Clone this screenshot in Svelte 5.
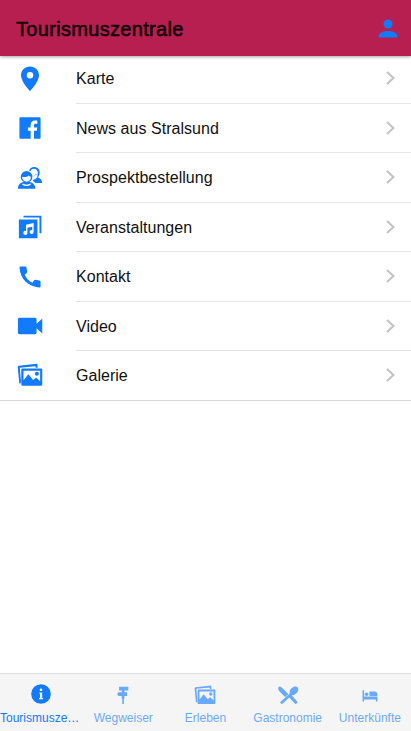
<script lang="ts">
  type Icon =
    | 'pin' | 'facebook' | 'people' | 'albums' | 'call' | 'videocam'
    | 'images' | 'info' | 'sign' | 'restaurant' | 'bed'

  interface Entry {
    label: string
    icon: Icon
  }

  const entries: Entry[] = [
    { label: 'Karte', icon: 'pin' },
    { label: 'News aus Stralsund', icon: 'facebook' },
    { label: 'Prospektbestellung', icon: 'people' },
    { label: 'Veranstaltungen', icon: 'albums' },
    { label: 'Kontakt', icon: 'call' },
    { label: 'Video', icon: 'videocam' },
    { label: 'Galerie', icon: 'images' }
  ]

  const tabs: Entry[] = [
    { label: 'Tourismuszentrale', icon: 'info' },
    { label: 'Wegweiser', icon: 'sign' },
    { label: 'Erleben', icon: 'images' },
    { label: 'Gastronomie', icon: 'restaurant' },
    { label: 'Unterkünfte', icon: 'bed' }
  ]

  let active = $state(0)
</script>

<!-- All icons share a 28x28 grid -->
{#snippet glyph(name: Icon)}
  <svg class="glyph" viewBox="0 0 28 28" aria-hidden="true">
    {#if name === 'pin'}
      <path fill-rule="evenodd" d="M14 .5c-5.400 0-9.700 4.200-9.700 9.400C4.300 17 14 27 14 27s9.700-10 9.700-17.100C23.700 4.700 19.400.5 14 .5zm0 5.900a3.500 3.500 0 1 1 0 7 3.500 3.500 0 0 1 0-7z" />
    {:else if name === 'facebook'}
      <path d="M24 2.500H4c-.8 0-1.400.6-1.400 1.400v20.200c0 .8.6 1.400 1.400 1.400h10.700v-8.600h-2.900v-3.500h2.900v-2.800c0-2.900 1.800-4.600 4.500-4.600 1.300 0 2.400.1 2.700.1v3.200h-1.800c-1.500 0-1.800.7-1.800 1.800v2.300h3.500l-.5 3.500h-3v8.600H24c.8 0 1.400-.6 1.400-1.400V3.900c0-.8-.6-1.400-1.400-1.400z" />
    {:else if name === 'people'}
      <path d="M13 6.300c.6-2.700 2.500-4.200 5.400-4.200 3.600 0 6 2.400 6 5.600 0 2.300-.8 4.300-2.300 5.600 2.600.9 4.700 2 4.900 6.100h-7.300c-.6-.9-1.400-1.500-2.700-2.100 1.500-1.800 2.100-4.100 1.700-6.500 1.500-.1 2.800-.6 3.900-1.600-.3-3.100-1.700-5.100-4.400-5.100-1.700 0-2.900.8-3.600 2.300z" />
      <path class="face" d="M22.400 9.500c-1.500 1.200-2.500 1.600-3.800 1.700.1 2-.2 3.200-.8 4.500 2.800-.1 4.500-2.400 4.600-6.200z" />
      <circle cx="10.300" cy="12.800" r="6.300" />
      <path d="M1 25.500c.1-4.300 2.300-6.200 5.700-7.200h7.200c3.500 1 5.700 2.900 5.800 7.200z" />
      <path class="face" d="M5.500 12.700c2.900.7 5.200.2 7-1.400.7.8 1.300 1.200 2.500 1.400-.2 3.500-2 5.300-4.700 5.300s-4.500-1.800-4.800-5.300z" />
      <path class="cut" d="M5.900 20.600c2.800 1.600 6 1.600 8.800 0" />
    {:else if name === 'albums'}
      <path d="M7 1.800h19.300v19h-2.100V3.900H7z" />
      <path fill-rule="evenodd" d="M2 6h20v20H2zM9.700 11.500v6.800a2.200 2.200 0 1 0 1.500 2.100v-5.700l5.200-1.100v3.700a2.200 2.200 0 1 0 1.500 2.100V9.700z" />
    {:else if name === 'call'}
      <path d="M8.900 2.700H4.100c-.9 0-1.400.6-1.400 1.400.8 12 9.200 20.300 21.200 21.200.9.100 1.500-.5 1.500-1.400v-4.800c0-.8-.5-1.300-1.200-1.400l-4.200-.7c-.6-.1-1.100.1-1.500.6l-2.100 2.500c-3.500-1.600-6.300-4.400-8.100-8.400l2.200-2.100c.5-.5.6-.9.5-1.500L10.200 4c-.1-.8-.6-1.300-1.300-1.300z" />
    {:else if name === 'videocam'}
      <path d="M2.700 5.200h16.700c1 0 1.700.7 1.700 1.700v4.600l6.100-5.700v16.400l-6.100-5.700v4.600c0 1-.7 1.700-1.700 1.700H2.700c-1 0-1.700-.7-1.700-1.700V6.900c0-1 .7-1.700 1.700-1.700z" />
    {:else if name === 'images'}
      <path d="M21.500 2 2 4.100c-.8.1-1.300.7-1.200 1.500l1.700 17.600 1.700-.2v-3.300L3 6.200l16.900-1.700.2 1.800h2.200L22 2.500c0-.3-.2-.5-.5-.5z" />
      <path fill-rule="evenodd" d="M5.900 7.100h20c.8 0 1.300.5 1.300 1.300v15.900c0 .8-.5 1.300-1.300 1.300h-20c-.8 0-1.300-.5-1.300-1.300V8.400c0-.8.5-1.300 1.300-1.300zm1.100 2.300v10.200l5.300-6.500 5 6.200 3.300-2.500 4.300 4V9.400zM21.400 10.400a2.200 2.200 0 1 1 0 4.400 2.200 2.200 0 0 1 0-4.400z" />
    {:else if name === 'info'}
      <path fill-rule="evenodd" d="M14 1.500a12.500 12.500 0 1 0 0 25 12.500 12.500 0 0 0 0-25zM14 7a1.700 1.700 0 1 1 0 3.400A1.700 1.700 0 0 1 14 7zM11.800 12h3.700v7.200h1v1.600h-5v-1.600h1.200v-5.700h-.9z" />
    {:else if name === 'sign'}
      <path d="M9 3.500h11.800v4.900h-5v2h3.300v5h-3.300v3.300h-.7v6.800h-2v-6.800h-.7v-3.300H8.200l-1.700-2.500 1.700-2.500h4.200v-2H9z" />
    {:else if name === 'restaurant'}
      <path d="M2.200 3.700c.8-.9 2.300-.7 3.500.5l8.700 8.600-4.100 3.800-6.700-6.700c-2.200-2.200-2.600-4.700-1.400-6.200z" />
      <path d="M18.700 14.300 26.400 23.100 23.700 25.700l-8.200-8.600-9.300 8.600-2.400-2.400L16.300 12.100c-.8-1.900.2-4.600 2.200-6.600 2.500-2.400 6-3.100 7.700-1.400s1.100 5.200-1.400 7.600c-1.900 1.800-4.100 2.800-6.100 2.600z" />
    {:else}
      <path d="M4.500 8h2v8h17v6.200h-2v-2.600h-15v2.600h-2zM23.500 15.200H13.300V9.700h6.200c2.400 0 4 1.500 4 3.700z" />
      <circle cx="9.700" cy="13" r="2.300" />
    {/if}
  </svg>
{/snippet}

<div class="page">
  <header class="toolbar">
    <h1>Tourismuszentrale</h1>
    <button class="profile" aria-label="Profil">
      <svg viewBox="0 0 20 20" aria-hidden="true">
        <circle cx="10" cy="5" r="4.500" />
        <path d="M.5 18.500v-1.300c0-3.400 5.500-5.200 9.500-5.200s9.500 1.800 9.500 5.200v1.300z" />
      </svg>
    </button>
  </header>

  <main>
    <ul class="list">
      {#each entries as entry (entry.label)}
        <li class="item">
          {@render glyph(entry.icon)}
          <div class="item-inner">
            <span class="label">{entry.label}</span>
            <svg class="chevron" viewBox="0 0 9 14" aria-hidden="true">
              <path d="M1 .9 7.400 7 1 13.100" />
            </svg>
          </div>
        </li>
      {/each}
    </ul>
  </main>

  <nav class="tabbar">
    {#each tabs as tab, i (tab.label)}
      <button class="tab" class:active={active === i} onclick={() => (active = i)}>
        {@render glyph(tab.icon)}
        <span class="tab-label">{tab.label}</span>
      </button>
    {/each}
  </nav>
</div>

<style>
  :global(body) {
    background: #fff;
  }

  .page {
    display: flex;
    flex-direction: column;
    height: 100vh;
    overflow: hidden;
    font-family: 'Liberation Sans', Arial, sans-serif;
    color: #111;
  }

  button {
    border: 0;
    padding: 0;
    background: none;
    font: inherit;
  }

  .toolbar {
    display: flex;
    flex: none;
    align-items: center;
    justify-content: space-between;
    position: relative;
    z-index: 1;
    box-sizing: border-box;
    height: 56px;
    padding: 2px 13px 0 16px;
    background: #b71f50;
    box-shadow: 0 1px 3px rgba(0, 0, 0, 0.35);
  }

  h1 {
    margin: 0;
    font-size: 20px;
    font-weight: 400;
    letter-spacing: 0.32px;
    color: #12030a;
    -webkit-text-stroke: 0.6px #12030a;
  }

  .profile {
    height: 20px;
    fill: #127bfb;
  }

  .profile svg {
    display: block;
    width: 20px;
    height: 20px;
  }

  main {
    flex: 1;
    min-height: 0;
  }

  .list {
    margin: -2px 0 0;
    padding: 0;
    list-style: none;
  }

  .item {
    display: flex;
    align-items: center;
    box-sizing: border-box;
    height: 49.5px;
    padding-left: 17px;
  }

  .item:last-child {
    border-bottom: 1px solid #d9d9dc;
  }

  .glyph {
    flex: none;
    width: 26px;
    height: 26px;
    fill: #127bfb;
  }

  .face {
    fill: #fff;
  }

  .cut {
    fill: none;
    stroke: #fff;
    stroke-width: 1.3;
  }

  .item-inner {
    display: flex;
    flex: 1;
    align-items: center;
    justify-content: space-between;
    box-sizing: border-box;
    height: 100%;
    margin-left: 33px;
    padding-right: 16px;
    border-bottom: 1px solid #e4e4e6;
  }

  .item:last-child .item-inner {
    border-bottom: 0;
  }

  .label {
    padding-top: 2px;
    font-size: 16px;
    letter-spacing: 0.03px;
  }

  .chevron {
    width: 9px;
    height: 14px;
    fill: none;
    stroke: #c3c3c6;
    stroke-width: 2.1;
  }

  .tabbar {
    display: grid;
    flex: none;
    grid-template-columns: repeat(5, minmax(0, 1fr));
    box-sizing: border-box;
    height: 58px;
    border-top: 1px solid #dedede;
    background: #f5f5f5;
  }

  .tab {
    display: flex;
    flex-direction: column;
    align-items: center;
    min-width: 0;
    padding-top: 10px;
    opacity: 0.62;
  }

  .tab.active {
    padding-top: 9px;
    opacity: 1;
  }

  .tab .glyph {
    width: 22px;
    height: 22px;
  }

  .tab-label {
    max-width: 100%;
    margin-top: 5px;
    overflow: hidden;
    font-size: 12px;
    line-height: 14px;
    text-overflow: ellipsis;
    white-space: nowrap;
    color: #127bfb;
  }

  .tab.active .tab-label {
    margin-top: 6px;
  }
</style>
